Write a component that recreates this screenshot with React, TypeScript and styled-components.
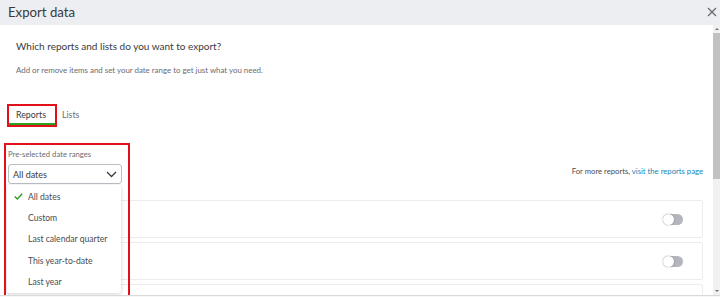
import React from "react"
import styled, { createGlobalStyle } from "styled-components"

const GlobalStyle = createGlobalStyle`
  html, body {
    margin: 0;
    padding: 0;
    background: #ffffff;
  }
  body {
    font-family: Lato, "Noto Sans", "Liberation Sans", sans-serif;
    color: #393a3d;
  }
`

const Modal = styled.div`
  width: 720px;
  height: 297px;
  display: flex;
  flex-direction: column;
  overflow: hidden;
  background: #ffffff;
`

const Header = styled.header`
  height: 25px;
  flex: none;
  display: flex;
  align-items: center;
  justify-content: space-between;
  padding: 0 2px 2px 8px;
  box-sizing: border-box;
  background: #eceef1;
`

const Title = styled.h1`
  margin: 0;
  font-size: 13.2px;
  font-weight: 400;
  color: #393a3d;
`

const CloseButton = styled.button`
  width: 12px;
  height: 12px;
  padding: 0;
  border: none;
  background: none;
  display: flex;
  align-items: center;
  justify-content: center;
  color: #6b6c72;
`

const Body = styled.div`
  height: 270px;
  flex: none;
  display: flex;
`

const Scroller = styled.main`
  flex: 1;
  overflow: hidden;
  padding: 0 10px 20px 8px;
`

const ScrollBar = styled.div`
  width: 7px;
  flex: none;
  display: flex;
  flex-direction: column;
  background: #f1f1f1;
`

const ScrollArrow = styled.div<{ $down?: boolean }>`
  height: 8px;
  flex: none;
  display: flex;
  align-items: center;
  justify-content: center;

  &::before {
    content: "";
    border-left: 2px solid transparent;
    border-right: 2px solid transparent;
    ${({ $down }) => ($down ? "border-top: 2px solid #6e6e6e;" : "border-bottom: 2px solid #6e6e6e;")}
  }
`

const ScrollThumb = styled.div`
  height: 146px;
  flex: none;
  background: #c1c1c1;
`

const ScrollTrack = styled.div`
  flex: 1;
`

const Intro = styled.section`
  padding: 12px 8px 0;
`

const Heading = styled.h2`
  margin: 0;
  font-size: 10px;
  line-height: 18px;
  font-weight: 400;
  color: #393a3d;
`

const Subtitle = styled.p`
  margin: 8px 0 0;
  font-size: 7.9px;
  line-height: 14px;
  color: #6b6c72;
`

const Tabs = styled.nav`
  display: flex;
  margin-top: 29px;
  padding-left: 1px;
`

const Tab = styled.div<{ $active?: boolean; $marked?: boolean }>`
  height: 19px;
  padding: 0 9px 0 7px;
  display: flex;
  align-items: center;
  box-sizing: border-box;
  font-size: 8.8px;
  color: ${({ $active }) => ($active ? "#393a3d" : "#6b6c72")};
  border-bottom: 2px solid ${({ $active }) => ($active ? "#2ca01c" : "transparent")};
  outline: ${({ $marked }) => ($marked ? "2px solid #e3101b" : "none")};
`

const FilterRow = styled.div`
  display: flex;
  justify-content: space-between;
  margin-top: 23px;
`

const DateField = styled.div`
  position: relative;
  width: 114px;
`

const FieldLabel = styled.label`
  display: block;
  font-size: 7.7px;
  line-height: 12px;
  color: #6b6c72;
`

const Select = styled.div`
  margin-top: 4px;
  height: 20px;
  display: flex;
  align-items: center;
  justify-content: space-between;
  padding: 0 4px;
  box-sizing: border-box;
  border: 1px solid #babec5;
  border-radius: 3px;
  font-size: 9px;
  color: #393a3d;
`

const Menu = styled.ul`
  position: absolute;
  top: 37px;
  left: -1px;
  width: 114px;
  margin: 0;
  padding: 1px 0;
  list-style: none;
  background: #ffffff;
  border-radius: 3px;
  box-shadow: 0 1px 4px rgba(0, 0, 0, 0.18);
  z-index: 2;
`

const MenuItem = styled.li`
  height: 21.3px;
  display: flex;
  align-items: center;
  padding-left: 7px;
  font-size: 8.6px;
  white-space: nowrap;
  color: #4a4b50;
`

const CheckSlot = styled.span`
  width: 9px;
  margin-right: 5px;
  display: flex;
  align-items: center;
`

const Callout = styled.div`
  position: absolute;
  top: -5px;
  left: -4px;
  width: 126px;
  height: 154px;
  box-sizing: border-box;
  border: 2px solid #e3101b;
  pointer-events: none;
  z-index: 3;
`

const MoreText = styled.p`
  align-self: flex-end;
  margin: 0 0 7px;
  font-size: 7.7px;
  line-height: 12px;
  color: #4a4b50;
`

const Link = styled.a`
  color: #1a86b3;
  text-decoration: none;
`

const ReportList = styled.div`
  display: flex;
  flex-direction: column;
  gap: 4px;
  margin-top: 16px;
`

const ReportCard = styled.div`
  height: 38px;
  box-sizing: border-box;
  display: flex;
  align-items: center;
  justify-content: flex-end;
  padding-right: 19px;
  border: 1px solid #ececec;
  border-radius: 2px;
`

const Toggle = styled.span`
  position: relative;
  width: 20px;
  height: 11px;
  border-radius: 6px;
  background: #b3b6bb;

  &::after {
    content: "";
    position: absolute;
    left: 0;
    top: 0;
    width: 11px;
    height: 11px;
    border-radius: 50%;
    background: #ffffff;
    box-shadow: 0 0 2px rgba(0, 0, 0, 0.35);
  }
`

const Footer = styled.footer`
  flex: 1;
  border-top: 1px solid #d9d9d9;
  background: #f7f7f7;
`

const ranges = ["All dates", "Custom", "Last calendar quarter", "This year-to-date", "Last year"]

export default function App() {
  return (
    <>
      <GlobalStyle />
      <Modal>
        <Header>
          <Title>Export data</Title>
          <CloseButton aria-label="Close">
            <svg width="10" height="10" viewBox="0 0 10 10">
              <path d="M1 1L9 9M9 1L1 9" stroke="currentColor" strokeWidth="1.3" fill="none" />
            </svg>
          </CloseButton>
        </Header>
        <Body>
          <Scroller>
            <Intro>
              <Heading>Which reports and lists do you want to export?</Heading>
              <Subtitle>Add or remove items and set your date range to get just what you need.</Subtitle>
            </Intro>
            <Tabs>
              <Tab $active $marked>Reports</Tab>
              <Tab>Lists</Tab>
            </Tabs>
            <FilterRow>
              <DateField>
                <FieldLabel>Pre-selected date ranges</FieldLabel>
                <Select>
                  All dates
                  <svg width="11" height="7" viewBox="0 0 11 7">
                    <path d="M1 1L5.5 5.5L10 1" stroke="#393a3d" strokeWidth="1.3" fill="none" />
                  </svg>
                </Select>
                <Menu>
                  {ranges.map((r, i) => (
                    <MenuItem key={r}>
                      <CheckSlot>
                        {i === 0 && (
                          <svg width="9" height="7" viewBox="0 0 9 7">
                            <path d="M0.8 3.5L3.3 6L8.2 0.8" stroke="#2ca01c" strokeWidth="1.4" fill="none" />
                          </svg>
                        )}
                      </CheckSlot>
                      {r}
                    </MenuItem>
                  ))}
                </Menu>
                <Callout />
              </DateField>
              <MoreText>
                For more reports, <Link href="#">visit the reports page</Link>
              </MoreText>
            </FilterRow>
            <ReportList>
              {[0, 1, 2].map((n) => (
                <ReportCard key={n}>
                  <Toggle />
                </ReportCard>
              ))}
            </ReportList>
          </Scroller>
          <ScrollBar>
            <ScrollArrow />
            <ScrollThumb />
            <ScrollTrack />
            <ScrollArrow $down />
          </ScrollBar>
        </Body>
        <Footer />
      </Modal>
    </>
  )
}
